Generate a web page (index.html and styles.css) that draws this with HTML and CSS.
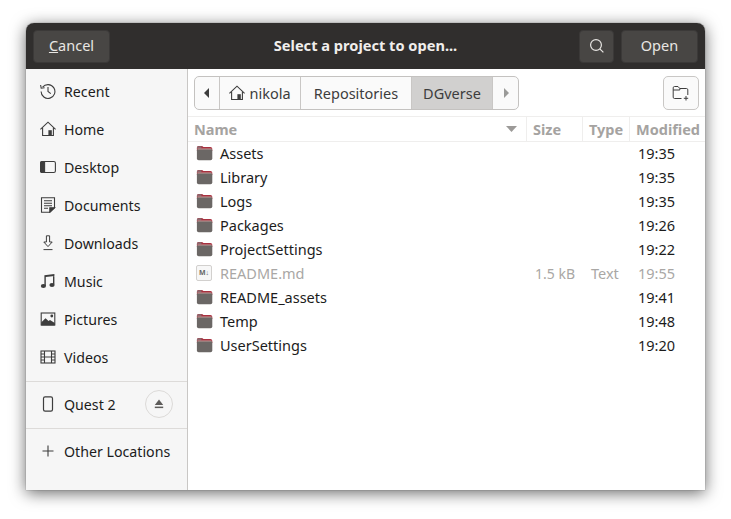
FILE: index.html
```html
<!DOCTYPE html>
<html lang="en">
<head>
  <meta charset="UTF-8" />
  <meta name="viewport" content="width=device-width, initial-scale=1.0"/>
  <title>Select a project to open...</title>
  <link rel="stylesheet" href="styles.css">
</head>
<body>
  <svg class="defs" width="0" height="0">
    <symbol id="folder" viewBox="0 0 16 16">
      <path d="M.4 3C.4 1.6 1.2 1 2.2 1H5.6L7 2H13.8C15 2 15.8 2.8 15.8 4V6H.4Z" fill="#a8303f"/>
      <path d="M.4 3C.4 1.8 1.2 1.2 2.2 1.2H5.4L4.6 3.4H.4Z" fill="#8d6a70"/>
      <rect x=".4" y="3.8" width="15.4" height="11.4" rx="1.8" fill="#6b6765"/>
      <rect x="1" y="3.6" width="14.2" height=".8" fill="#d8a8a6"/>
    </symbol>
  </svg>

  <div class="window">
    <header class="titlebar">
      <div class="hb-left">
        <button class="hb-btn cancel"><u>C</u>ancel</button>
      </div>
      <div class="title">Select a project to open...</div>
      <div class="hb-right">
        <button class="hb-btn search">
          <svg width="16" height="16" viewBox="0 0 16 16" fill="none" stroke="#e8e6e3" stroke-width="1.2"><circle cx="7" cy="7" r="5.4"/><path d="M10.8 10.8L14.4 14.4"/></svg>
        </button>
        <button class="hb-btn open">Open</button>
      </div>
    </header>

    <div class="content">
      <aside class="sidebar">
        <ul class="places">
          <li>
            <svg class="ico" viewBox="0 0 16 16" fill="none" stroke="#3d3d3d" stroke-width="1.1"><path d="M2.6 4.2A6.9 6.9 0 1 1 1.1 8.4"/><path d="M.6 2L1.2 5.2L4.6 4.8"/><path d="M8 4V8.4L10.8 10.6"/></svg>
            <span>Recent</span>
          </li>
          <li>
            <svg class="ico" viewBox="0 0 16 16" fill="none" stroke="#3d3d3d" stroke-width="1.1"><path d="M.4 8.4L8 1.2L15.6 8.4"/><path d="M2.6 6.8V14.5H13.4V6.8"/><rect x="8.4" y="9.2" width="3.4" height="5.3" fill="#3d3d3d" stroke="none"/></svg>
            <span>Home</span>
          </li>
          <li>
            <svg class="ico" viewBox="0 0 16 16" fill="none" stroke="#3d3d3d" stroke-width="1.1"><rect x=".6" y="2.5" width="14.8" height="11" rx="1.6"/><path d="M.6 4.2C.6 3 1.2 2.5 2.2 2.5H4.6V13.5H2.2C1.2 13.5 .6 13 .6 11.8Z" fill="#3d3d3d"/></svg>
            <span>Desktop</span>
          </li>
          <li>
            <svg class="ico" viewBox="0 0 16 16" fill="none" stroke="#3d3d3d" stroke-width="1.1"><path d="M1.5 .8H14.5V10.8L9.8 15.2H1.5Z"/><path d="M4 3.8H12M4 6.3H12M4 8.8H12M4 11.3H8"/><path d="M9.8 15.2V10.8H14.5Z" fill="#3d3d3d"/></svg>
            <span>Documents</span>
          </li>
          <li>
            <svg class="ico" viewBox="0 0 16 16" fill="none" stroke="#3d3d3d" stroke-width="1"><path d="M6.4 .8H9.6V7H12.2L8 11.6L3.8 7H6.4Z"/><path d="M3.5 14.6H12.5"/></svg>
            <span>Downloads</span>
          </li>
          <li>
            <svg class="ico" viewBox="0 0 16 16" fill="#3d3d3d"><path d="M4.4 2.2L14.4 1V3L5.8 4V13H4.4ZM13 2.4H14.4V11.6H13Z"/><ellipse cx="3.4" cy="13" rx="2.6" ry="2"/><ellipse cx="12" cy="12" rx="2.6" ry="2"/></svg>
            <span>Music</span>
          </li>
          <li>
            <svg class="ico" viewBox="0 0 16 16" fill="none" stroke="#3d3d3d" stroke-width="1.1"><rect x="1.2" y="2" width="13.6" height="12"/><path d="M1.2 11.5L5.5 7.2L8.5 10L10 9L14.8 12V14.5H1.2Z" fill="#3d3d3d" stroke="none"/><circle cx="11.8" cy="5" r="1.4" fill="#3d3d3d" stroke="none"/></svg>
            <span>Pictures</span>
          </li>
          <li>
            <svg class="ico" viewBox="0 0 16 16" fill="none" stroke="#3d3d3d" stroke-width="1.1"><rect x="1" y="2" width="14" height="12"/><path d="M4.5 2V14M11.5 2V14M4.5 8H11.5M1 5H4.5M1 8H4.5M1 11H4.5M11.5 5H15M11.5 8H15M11.5 11H15"/></svg>
            <span>Videos</span>
          </li>
        </ul>
        <div class="device">
          <svg class="ico" viewBox="0 0 16 16" fill="none" stroke="#3d3d3d" stroke-width="1.2"><rect x="3.5" y=".8" width="9" height="14.4" rx="1.6"/></svg>
          <span>Quest 2</span>
          <button class="eject">
            <svg width="10" height="10" viewBox="0 0 10 10" fill="#5e5c5a"><path d="M5 .6L9.2 6H.8Z"/><rect x=".8" y="7.6" width="8.4" height="1.5"/></svg>
          </button>
        </div>
        <div class="other">
          <svg class="ico" viewBox="0 0 16 16" fill="none" stroke="#3d3d3d" stroke-width="1.1"><path d="M8 2.5V13.5M2.5 8H13.5"/></svg>
          <span>Other Locations</span>
        </div>
      </aside>

      <main class="main">
        <div class="toolbar">
          <nav class="pathbar">
            <button class="arrow">
              <svg width="8" height="10" viewBox="0 0 8 10" fill="#3d3d3d"><path d="M6 0V10L1 5Z"/></svg>
            </button>
            <button class="crumb home-crumb">
              <svg width="16" height="16" viewBox="0 0 16 16" fill="none" stroke="#3d3d3d" stroke-width="1.1"><path d="M.4 8.4L8 1.2L15.6 8.4"/><path d="M2.6 6.8V14.5H13.4V6.8"/><rect x="8.4" y="9.2" width="3.4" height="5.3" fill="#3d3d3d" stroke="none"/></svg>
              nikola
            </button>
            <button class="crumb repos">Repositories</button>
            <button class="crumb current">DGverse</button>
            <button class="arrow next">
              <svg width="8" height="10" viewBox="0 0 8 10" fill="#9a9a98"><path d="M2 0V10L7 5Z"/></svg>
            </button>
          </nav>
          <button class="new-folder">
            <svg width="18" height="16" viewBox="0 0 18 16" fill="none" stroke="#3d3d3d" stroke-width="1"><path d="M9.5 13.5H2.5C1.7 13.5 1.2 13 1.2 12.2V2.8C1.2 2 1.7 1.5 2.5 1.5H6L7.8 3.5H14.5C15.3 3.5 15.8 4 15.8 4.8V10"/><path d="M1.2 5H7.8L7.8 3.5"/><path d="M14 11V15.5M11.8 13.3H16.2"/></svg>
          </button>
        </div>

        <div class="columns row-grid">
          <div class="col col-name">Name
            <svg width="11" height="6" viewBox="0 0 11 6" fill="#9c9a98"><path d="M0 0H11L5.5 6Z"/></svg>
          </div>
          <div class="col">Size</div>
          <div class="col">Type</div>
          <div class="col">Modified</div>
        </div>

        <ul class="files">
          <li class="row-grid"><span class="fname"><svg class="folder"><use href="#folder"/></svg>Assets</span><span></span><span></span><span class="time">19:35</span></li>
          <li class="row-grid"><span class="fname"><svg class="folder"><use href="#folder"/></svg>Library</span><span></span><span></span><span class="time">19:35</span></li>
          <li class="row-grid"><span class="fname"><svg class="folder"><use href="#folder"/></svg>Logs</span><span></span><span></span><span class="time">19:35</span></li>
          <li class="row-grid"><span class="fname"><svg class="folder"><use href="#folder"/></svg>Packages</span><span></span><span></span><span class="time">19:26</span></li>
          <li class="row-grid"><span class="fname"><svg class="folder"><use href="#folder"/></svg>ProjectSettings</span><span></span><span></span><span class="time">19:22</span></li>
          <li class="row-grid dim"><span class="fname"><span class="md-icon">M↓</span>README.md</span><span class="size">1.5 kB</span><span class="type">Text</span><span class="time">19:55</span></li>
          <li class="row-grid"><span class="fname"><svg class="folder"><use href="#folder"/></svg>README_assets</span><span></span><span></span><span class="time">19:41</span></li>
          <li class="row-grid"><span class="fname"><svg class="folder"><use href="#folder"/></svg>Temp</span><span></span><span></span><span class="time">19:48</span></li>
          <li class="row-grid"><span class="fname"><svg class="folder"><use href="#folder"/></svg>UserSettings</span><span></span><span></span><span class="time">19:20</span></li>
        </ul>
      </main>
    </div>
  </div>
</body>
</html>
```

FILE: styles.css
```css
* {
  box-sizing: border-box;
}
html, body {
  height: 100%;
}
body {
  margin: 0;
  padding: 23px 26px 29px;
  background: #fff;
  font-family: "Noto Sans", "Open Sans", sans-serif;
  font-size: 14.5px;
  color: #1c1c1c;
  overflow: hidden;
}
button {
  font: inherit;
  cursor: pointer;
}
ul {
  list-style: none;
  margin: 0;
  padding: 0;
}
.defs {
  position: absolute;
}
.window {
  width: 679px;
  height: 467px;
  border-radius: 8px 8px 0 0;
  box-shadow: 0 3px 16px rgba(0,0,0,0.6), 0 0 1px rgba(0,0,0,0.7);
  display: flex;
  flex-direction: column;
  overflow: hidden;
  background: #fff;
}

/* title bar */
.titlebar {
  height: 46px;
  flex: none;
  background: #302e2d;
  display: grid;
  grid-template-columns: 1fr auto 1fr;
  align-items: center;
  padding: 0 7px;
  color: #f0eeec;
}
.title {
  text-align: center;
  font-weight: bold;
  font-size: 14.6px;
  padding-bottom: 2px;
}
.hb-right {
  display: flex;
  justify-content: flex-end;
  gap: 7px;
}
.hb-btn {
  height: 33px;
  background: #484644;
  border: 1px solid #3b3938;
  border-radius: 4px;
  color: #e8e6e3;
  display: flex;
  align-items: center;
  justify-content: center;
  padding: 0 0 2px;
}
.cancel { width: 77px; }
.search { width: 35px; padding: 0; }
.open { width: 77px; }

.content {
  flex: 1;
  display: flex;
  min-height: 0;
}

/* sidebar */
.sidebar {
  width: 162px;
  flex: none;
  background: #f6f6f6;
  border-right: 1px solid #c9c7c5;
  display: flex;
  flex-direction: column;
  font-size: 14.2px;
}
.places {
  padding: 3px 0 5px;
  border-bottom: 1px solid #dddbd9;
}
.places li {
  height: 38px;
  display: flex;
  align-items: center;
}
.ico {
  width: 16px;
  height: 16px;
  margin: 0 8px 0 14px;
  flex: none;
}
.device {
  height: 47px;
  display: flex;
  align-items: center;
  border-bottom: 1px solid #dddbd9;
  padding-bottom: 2px;
}
.eject {
  width: 28px;
  height: 28px;
  margin-left: auto;
  margin-right: 14px;
  border-radius: 50%;
  border: 1px solid #dcdad8;
  background: #f6f6f6;
  display: flex;
  align-items: center;
  justify-content: center;
  padding: 0;
}
.other {
  height: 46px;
  display: flex;
  align-items: center;
  padding-bottom: 2px;
}

/* main */
.main {
  flex: 1;
  display: flex;
  flex-direction: column;
  min-width: 0;
}
.toolbar {
  height: 48px;
  flex: none;
  padding: 7px 6px 0 6px;
  display: flex;
  justify-content: space-between;
  border-bottom: 1px solid #efeeed;
}
.pathbar {
  display: flex;
  height: 34px;
  border: 1px solid #c4c2c0;
  border-radius: 5px;
  background: #fafafa;
  overflow: hidden;
}
.arrow, .crumb {
  height: 100%;
  background: none;
  border: 0;
  border-right: 1px solid #c9c7c5;
  padding: 0;
  color: #3d3d3d;
  display: flex;
  align-items: center;
  justify-content: center;
}
.arrow { width: 25px; }
.arrow.next { border-right: 0; }
.home-crumb { width: 81px; gap: 4px; }
.repos { width: 111px; }
.crumb.current { width: 81px; background: #d1d0cf; }
.new-folder {
  width: 36px;
  height: 34px;
  background: #fafafa;
  border: 1px solid #c9c7c5;
  border-radius: 5px;
  display: flex;
  align-items: center;
  justify-content: center;
  padding: 0;
}
.row-grid {
  display: grid;
  grid-template-columns: 339px 56px 47px 1fr;
}
.columns {
  height: 25px;
  flex: none;
  border-bottom: 1px solid #efeeed;
  font-weight: bold;
  color: #a5a3a1;
}
.col {
  padding: 0 0 1px 6px;
  border-right: 1px solid #efeeed;
  display: flex;
  align-items: center;
  white-space: nowrap;
}
.col:last-child {
  border-right: 0;
}
.col-name {
  justify-content: space-between;
  padding-right: 9px;
}
.files li {
  height: 24px;
  align-items: center;
  padding-bottom: 2px;
}
.fname {
  display: flex;
  align-items: center;
  padding-left: 8px;
  line-height: 22px;
}
.folder {
  width: 17px;
  height: 16px;
  margin-right: 7px;
  flex: none;
}
.md-icon {
  width: 16px;
  height: 16px;
  margin-right: 8px;
  flex: none;
  border: 1px solid #d2d0ce;
  border-radius: 2px;
  background: #f7f7f7;
  color: #666;
  font-size: 7px;
  font-weight: bold;
  line-height: 14px;
  text-align: center;
}
.size {
  text-align: right;
  padding-right: 8px;
  font-size: 14px;
}
.type {
  padding-left: 8px;
}
.time {
  padding-left: 8px;
}
.dim {
  color: #a9a7a5;
}
```
